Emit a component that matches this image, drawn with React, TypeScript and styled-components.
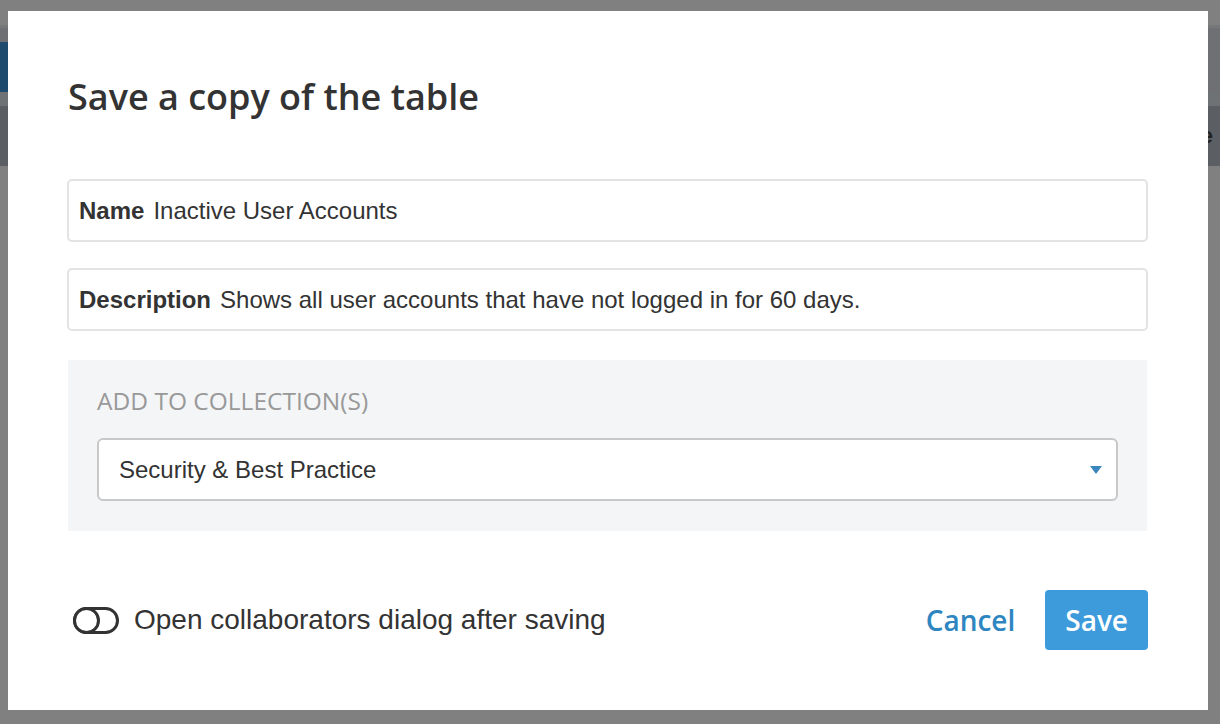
import * as React from "react";
import styled, { createGlobalStyle } from "styled-components";

const GlobalStyle = createGlobalStyle`
  html, body {
    margin: 0;
    padding: 0;
    background: #808080;
    font-family: "Liberation Sans", Arial, sans-serif;
  }
`;

const Page = styled.div`
  position: relative;
  width: 1220px;
  height: 724px;
  overflow: hidden;
  background: #808080;
`;

const AppShell = styled.div`
  display: flex;
  flex-direction: column;
  padding-top: 25px;
`;

const Band = styled.div<{ $h: number; $bg: string }>`
  height: ${(p) => p.$h}px;
  background: ${(p) => p.$bg};
  display: flex;
  justify-content: space-between;
  align-items: center;
`;

const Brand = styled.div`
  width: 120px;
  height: 100%;
  background: #1e4b6d;
`;

const GhostText = styled.span`
  margin-left: auto;
  margin-right: 7px;
  font-size: 22px;
  font-weight: 700;
  color: #222;
`;

const Overlay = styled.div`
  position: absolute;
  inset: 0;
  padding: 11px 12px 14px 8px;
  display: flex;
`;

const Modal = styled.div`
  flex: 1;
  background: #fff;
  display: flex;
  flex-direction: column;
  padding: 62px 60px 0 59px;
  box-sizing: border-box;
`;

const Title = styled.h2`
  margin: 0 0 0 1px;
  font-family: "Open Sans", sans-serif;
  font-weight: 600;
  font-size: 36px;
  line-height: 48px;
  color: #333;
`;

const Field = styled.div<{ $top: number }>`
  margin-top: ${(p) => p.$top}px;
  height: 63px;
  box-sizing: border-box;
  border: 2px solid #e3e3e3;
  border-radius: 5px;
  display: flex;
  align-items: center;
  padding: 0 10px;
  font-size: 24px;
  color: #333;
`;

const FieldLabel = styled.span`
  font-weight: 700;
  margin-right: 9px;
`;

const Collection = styled.div`
  margin: 29px 1px 0 1px;
  background: #f4f5f7;
  padding: 28px 29px 30px 29px;
  display: flex;
  flex-direction: column;
`;

const SectionLabel = styled.div`
  font-family: "Open Sans", sans-serif;
  font-size: 24.5px;
  font-weight: 400;
  line-height: 26px;
  color: #999;
`;

const Select = styled.div`
  margin-top: 24px;
  height: 63px;
  box-sizing: border-box;
  background: #fff;
  border: 2px solid #c8c8c8;
  border-radius: 6px;
  display: flex;
  align-items: center;
  justify-content: space-between;
  padding: 0 14px 0 20px;
  font-size: 24px;
  color: #333;
`;

const Caret = styled.span`
  width: 0;
  height: 0;
  border-left: 6px solid transparent;
  border-right: 6px solid transparent;
  border-top: 8px solid #3a87c0;
`;

const Footer = styled.div`
  margin-top: 59px;
  display: flex;
  align-items: center;
  justify-content: space-between;
`;

const ToggleRow = styled.label`
  display: flex;
  align-items: center;
  gap: 15px;
  padding-left: 6px;
  font-size: 28px;
  color: #333;
`;

const Toggle = styled.span`
  position: relative;
  width: 46px;
  height: 27px;
  box-sizing: border-box;
  border: 3px solid #333;
  border-radius: 14px;

  &::after {
    content: "";
    position: absolute;
    left: -3px;
    top: -3px;
    width: 27px;
    height: 27px;
    box-sizing: border-box;
    border: 3px solid #333;
    border-radius: 50%;
    background: #fff;
  }
`;

const Actions = styled.div`
  display: flex;
  align-items: center;
  gap: 30px;
`;

const Button = styled.button<{ $primary?: boolean }>`
  font-family: "Open Sans", sans-serif;
  font-size: 28px;
  font-weight: 600;
  height: 60px;
  padding: 0 ${(p) => (p.$primary ? "20px" : "0")};
  border: none;
  border-radius: 4px;
  background: ${(p) => (p.$primary ? "#3d9bdc" : "transparent")};
  color: ${(p) => (p.$primary ? "#fff" : "#2e86c1")};
  cursor: pointer;
`;

export default function App() {
  return (
    <Page>
      <GlobalStyle />
      <AppShell>
        <Band $h={3} $bg="#767779" />
        <Band $h={14} $bg="#6e7073" />
        <Band $h={50} $bg="#6e7073">
          <Brand />
        </Band>
        <Band $h={14} $bg="#6f7275" />
        <Band $h={60} $bg="#5b5f63">
          <GhostText>e</GhostText>
        </Band>
      </AppShell>
      <Overlay>
        <Modal>
          <Title>Save a copy of the table</Title>
          <Field $top={58}>
            <FieldLabel>Name</FieldLabel>
            Inactive User Accounts
          </Field>
          <Field $top={26}>
            <FieldLabel>Description</FieldLabel>
            Shows all user accounts that have not logged in for 60 days.
          </Field>
          <Collection>
            <SectionLabel>ADD TO COLLECTION(S)</SectionLabel>
            <Select>
              Security &amp; Best Practice
              <Caret />
            </Select>
          </Collection>
          <Footer>
            <ToggleRow>
              <Toggle />
              Open collaborators dialog after saving
            </ToggleRow>
            <Actions>
              <Button>Cancel</Button>
              <Button $primary>Save</Button>
            </Actions>
          </Footer>
        </Modal>
      </Overlay>
    </Page>
  );
}
